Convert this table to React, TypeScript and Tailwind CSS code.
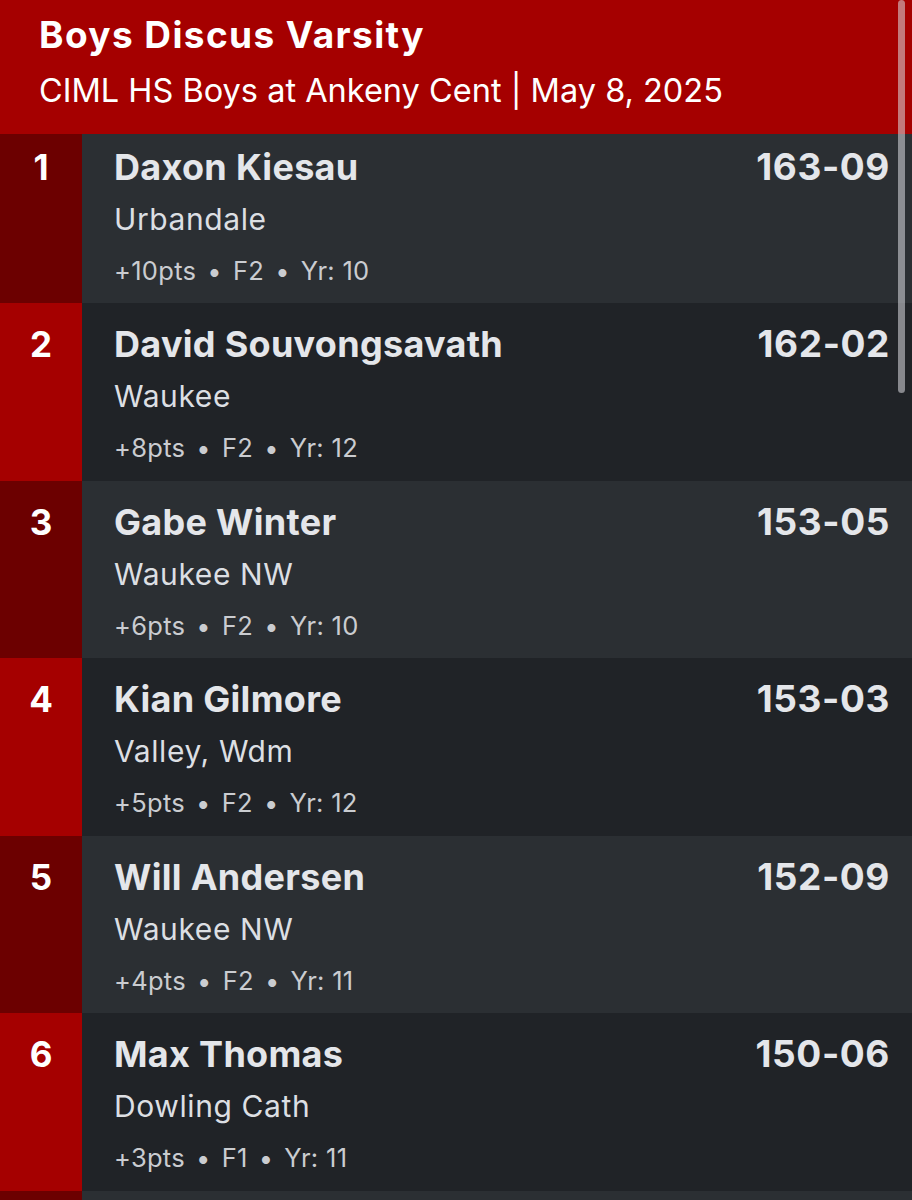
import React from "react";

type Row = { rank: number; name: string; school: string; pts: string; flight: string; yr: string; mark: string };

const rows: Row[] = [
  { rank: 1, name: "Daxon Kiesau", school: "Urbandale", pts: "+10pts", flight: "F2", yr: "10", mark: "163-09" },
  { rank: 2, name: "David Souvongsavath", school: "Waukee", pts: "+8pts", flight: "F2", yr: "12", mark: "162-02" },
  { rank: 3, name: "Gabe Winter", school: "Waukee NW", pts: "+6pts", flight: "F2", yr: "10", mark: "153-05" },
  { rank: 4, name: "Kian Gilmore", school: "Valley, Wdm", pts: "+5pts", flight: "F2", yr: "12", mark: "153-03" },
  { rank: 5, name: "Will Andersen", school: "Waukee NW", pts: "+4pts", flight: "F2", yr: "11", mark: "152-09" },
  { rank: 6, name: "Max Thomas", school: "Dowling Cath", pts: "+3pts", flight: "F1", yr: "11", mark: "150-06" },
];

function RowItem({ r, first }: { r: Row; first: boolean }) {
  const odd = r.rank % 2 === 1;
  const pad = first ? "pt-[13px]" : "pt-[21px]";
  return (
    <div className={`flex shrink-0 ${first ? "h-[169px]" : "h-[177.6px]"} ${odd ? "bg-[#2b2f33]" : "bg-[#202327]"}`}>
      <div className={`w-[82px] shrink-0 flex justify-center ${odd ? "bg-[#6c0000]" : "bg-[#a50000]"} ${pad}`}>
        <span className="text-[35px] font-bold text-white leading-[40px]">{r.rank}</span>
      </div>
      <div className={`flex-1 flex justify-between pl-[32px] pr-[22px] ${pad}`}>
        <div className="flex flex-col">
          <span className="text-[36px] font-bold text-[#e4e6ea] leading-[40px] tracking-[0.3px]">{r.name}</span>
          <span className="text-[30px] text-[#dcdfe3] leading-[36px] mt-[14px] tracking-[0.6px]">{r.school}</span>
          <span className="text-[25.5px] text-[#caccd0] leading-[30px] mt-[19px] tracking-[0.3px]">
            {r.pts}<span className="mx-[11px]">•</span>{r.flight}<span className="mx-[11px]">•</span>Yr: {r.yr}
          </span>
        </div>
        <span className="text-[37px] font-bold text-[#e4e6ea] leading-[40px] tracking-[0.6px]">{r.mark}</span>
      </div>
    </div>
  );
}

export default function App() {
  return (
    <div className="relative w-[912px] h-[1200px] overflow-hidden bg-[#202327] flex flex-col" style={{ fontFamily: "Inter, 'Noto Sans', sans-serif" }}>
      <div className="h-[134px] shrink-0 bg-[#a50000] pl-[39px] pt-[14px]">
        <div className="text-[37px] font-bold text-white leading-[42px] tracking-[1.4px]">Boys Discus Varsity</div>
        <div className="text-[32.5px] text-white leading-[36px] mt-[17px]">CIML HS Boys at Ankeny Cent | May 8, 2025</div>
      </div>
      {rows.map((r, i) => (
        <RowItem key={r.rank} r={r} first={i === 0} />
      ))}
      <div className="flex shrink-0 h-[40px] bg-[#2b2f33]">
        <div className="w-[82px] shrink-0 bg-[#6c0000]" />
      </div>
      <div className="absolute left-[898px] top-0 w-[7px] h-[393px] rounded-full bg-[rgba(220,220,225,0.55)]" />
    </div>
  );
}
